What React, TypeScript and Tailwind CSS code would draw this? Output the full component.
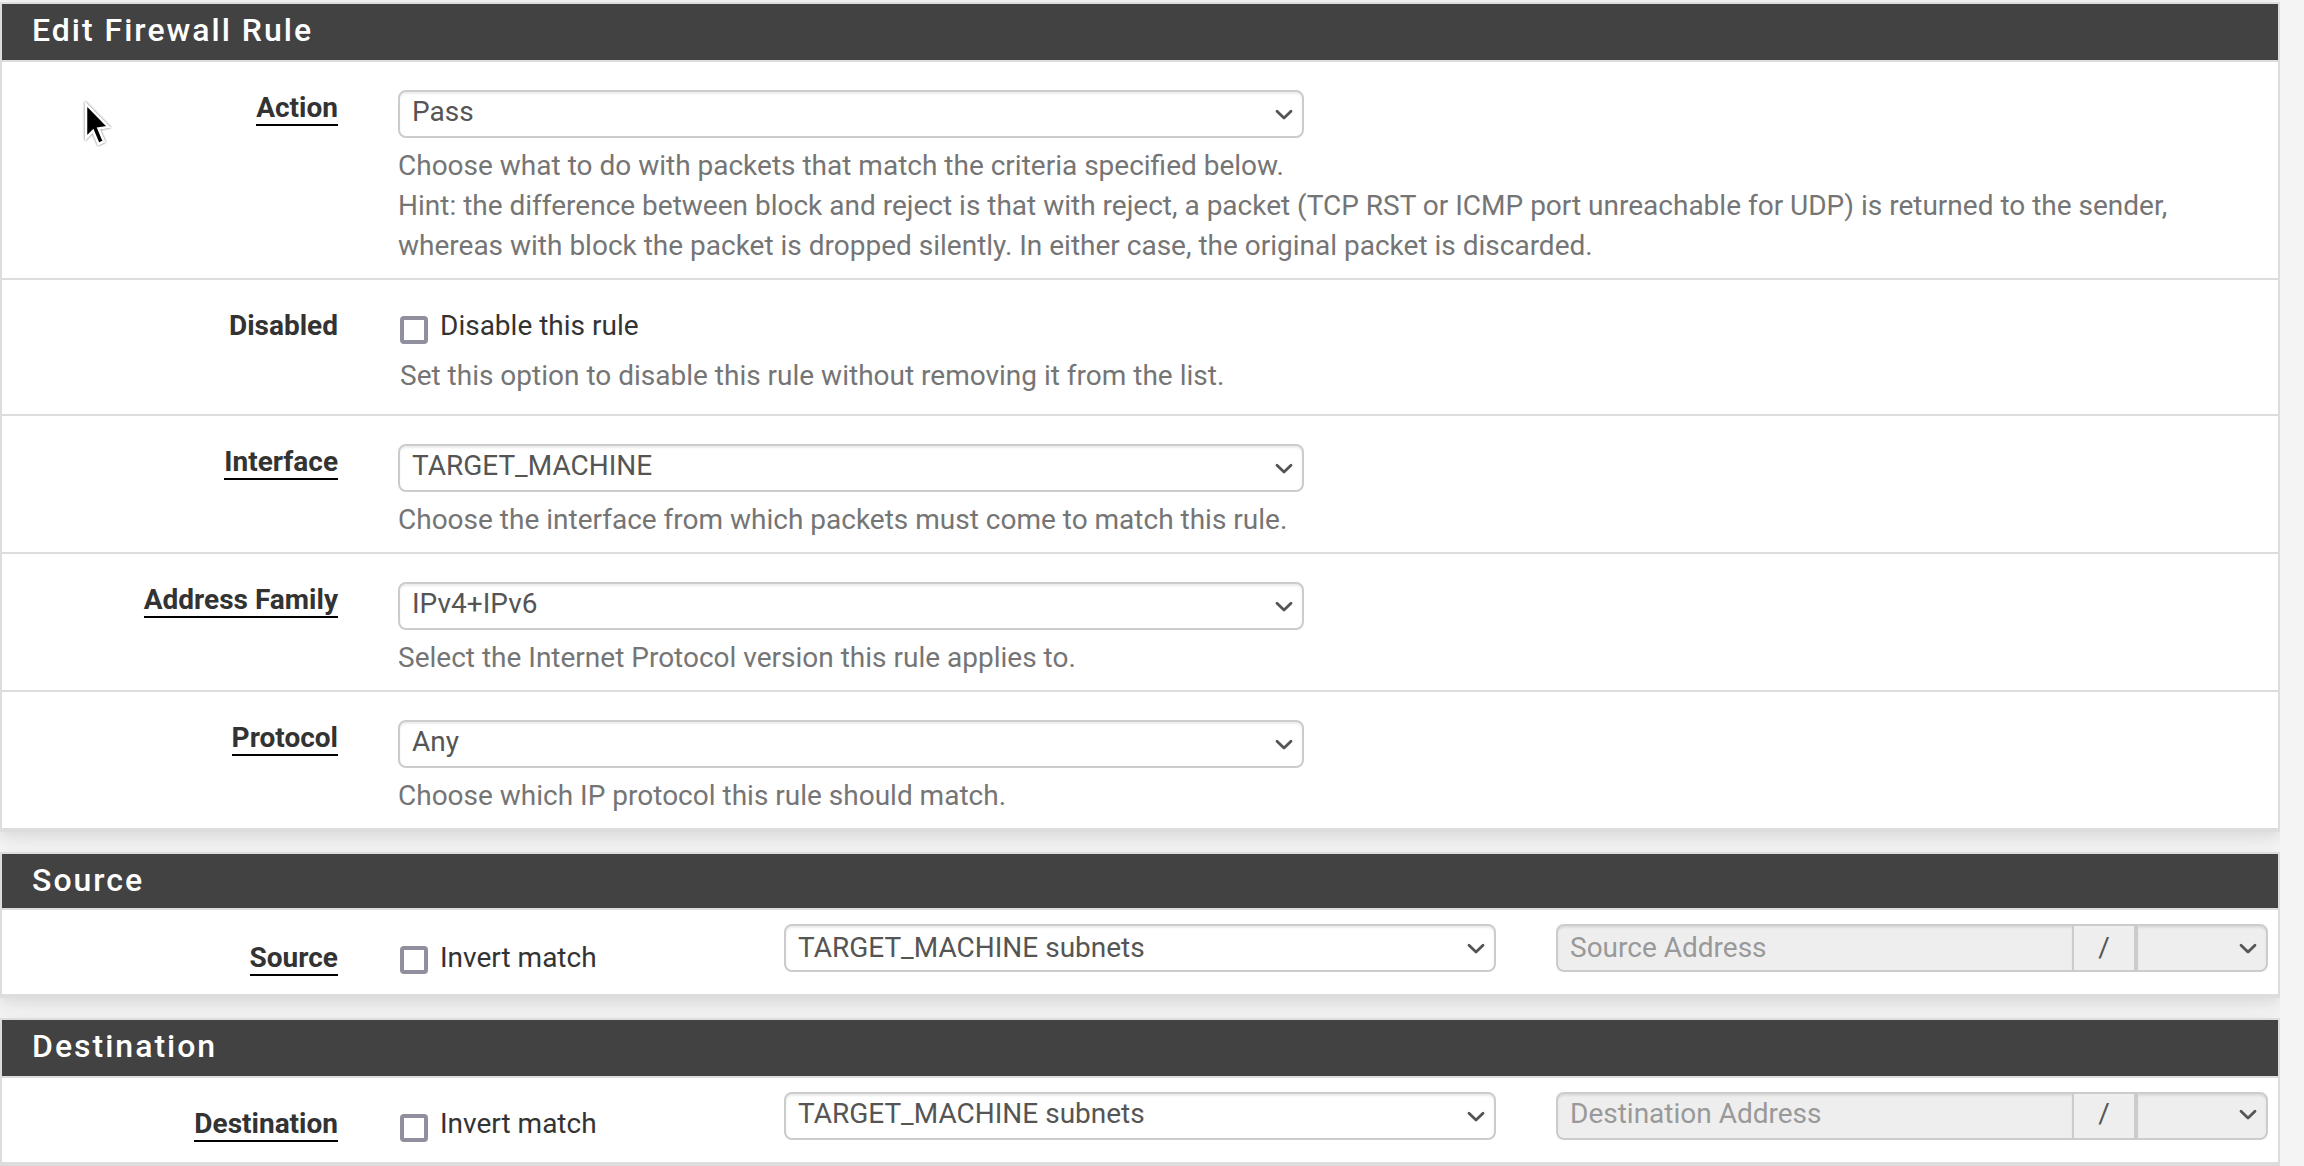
import React from "react";

function Chevron({ className = "mt-[2px]" }: { className?: string }) {
  return (
    <svg width="18" height="12" viewBox="0 0 18 12" className={`shrink-0 ${className}`} fill="none">
      <path d="M2 2.2 L9 9 L16 2.2" stroke="#555" strokeWidth="2.8" strokeLinecap="round" strokeLinejoin="round" />
    </svg>
  );
}

function Select({ value, className, textClass = "-mt-[4px]" }: { value: string; className: string; textClass?: string }) {
  return (
    <div
      className={`flex h-12 items-center justify-between rounded-lg border-2 border-[#ccc] bg-white pl-3 pr-[9px] text-[#555] shadow-[inset_0_2px_2px_rgba(0,0,0,0.075)] ${className}`}
    >
      <span className={textClass}>{value}</span>
      <Chevron />
    </div>
  );
}

function Checkbox({ label, className = "", boxClass }: { label: string; className?: string; boxClass: string }) {
  return (
    <div className={`flex items-start ${className}`}>
      <span className={`size-7 shrink-0 rounded-[4px] border-4 border-[#8f8f9d] bg-white ${boxClass}`} />
      <span className="ml-3 whitespace-nowrap leading-10">{label}</span>
    </div>
  );
}

function Label({ text, plain = false, className }: { text: string; plain?: boolean; className: string }) {
  return (
    <div className={`flex w-[336px] shrink-0 items-start justify-end font-bold ${className}`}>
      <span className={plain ? "leading-[36px]" : "h-9 border-b-2 border-black leading-[36px]"}>{text}</span>
    </div>
  );
}

function Panel({ title, headHeight, children }: { title: string; headHeight: string; children: React.ReactNode }) {
  return (
    <section className="border-2 border-[#ddd] bg-white shadow-[0_6px_12px_rgba(0,0,0,0.08),0_0_40px_rgba(0,0,0,0.03)]">
      <h2 className={`bg-[#424242] pl-[30px] pt-[7px] text-[32px] font-medium leading-[38px] tracking-[2px] text-white ${headHeight}`}>{title}</h2>
      {children}
    </section>
  );
}

const rowBase = "flex items-start border-t-2 border-[#ddd]";

function SelectRow({ label, value, help, height }: { label: string; value: string; help: React.ReactNode; height: string }) {
  return (
    <div className={`${rowBase} ${height}`}>
      <Label text={label} className="mt-[28px]" />
      <div className="ml-[60px] mt-[28px]">
        <Select value={value} className="w-[906px]" />
        <p className="mt-2 leading-10 text-[#757575]">{help}</p>
      </div>
    </div>
  );
}

interface AddressRowProps {
  label: string;
  placeholder: string;
  labelClass: string;
  checkClass: string;
  boxClass: string;
  textClass: string;
  chevronClass: string;
}

function AddressRow({ label, placeholder, labelClass, checkClass, boxClass, textClass, chevronClass }: AddressRowProps) {
  return (
    <div className={`${rowBase} h-[88px] border-b-2`}>
      <Label text={label} className={labelClass} />
      <Checkbox label="Invert match" className={`ml-[62px] w-[384px] ${checkClass}`} boxClass={boxClass} />
      <Select value="TARGET_MACHINE subnets" className="mt-[14px] w-[712px]" textClass={textClass} />
      <div className="ml-[60px] mt-[14px] flex h-12 w-[712px] text-[#555]">
        <div className="flex w-[516px] items-center rounded-l-lg border-2 border-r-0 border-[#ccc] bg-[#eee] pl-3 text-[#999] shadow-[inset_0_2px_2px_rgba(0,0,0,0.075)]">
          <span className={textClass}>{placeholder}</span>
        </div>
        <div className="flex w-[62px] items-center justify-center border-2 border-r-0 border-[#ccc] bg-[#eee]">
          <span className={textClass}>/</span>
        </div>
        <div className="flex flex-1 items-center justify-end rounded-r-lg border-2 border-l-4 border-[#ccc] bg-[#eee] pr-[9px] shadow-[inset_0_2px_2px_rgba(0,0,0,0.075)]">
          <Chevron className={chevronClass} />
        </div>
      </div>
    </div>
  );
}

function Pointer() {
  return (
    <svg
      width="30"
      height="48"
      viewBox="0 0 30 48"
      className="absolute left-[83px] top-[100px] drop-shadow-[0_0_1px_rgba(0,0,0,0.6)]"
    >
      <path d="M3 4 L3 38 L10 31 L15.5 44 L21 41.5 L15.5 28.5 L25.5 27 Z" fill="#000" stroke="#fff" strokeWidth="2.5" />
    </svg>
  );
}

export default function App() {
  return (
    <div className="relative h-[1166px] w-[2304px] overflow-hidden bg-[#f4f4f4] font-['Roboto',sans-serif] text-[28px] leading-10 text-[#333]">
      <main className="flex h-[1166px] w-[2280px] flex-col gap-5 overflow-hidden pt-[2px]">
        <Panel title="Edit Firewall Rule" headHeight="h-[56px]">
          <SelectRow
            label="Action"
            value="Pass"
            height="h-[218px]"
            help={
              <>
                Choose what to do with packets that match the criteria specified below.
                <br />
                Hint: the difference between block and reject is that with reject, a packet (TCP RST or ICMP port unreachable for UDP) is returned to the sender,
                <br />
                whereas with block the packet is dropped silently. In either case, the original packet is discarded.
              </>
            }
          />
          <div className={`${rowBase} h-[136px]`}>
            <Label text="Disabled" plain className="mt-[28px]" />
            <div className="ml-[62px] mt-[26px]">
              <Checkbox label="Disable this rule" boxClass="mt-[10px]" />
              <p className="mt-[10px] leading-10 text-[#757575]">Set this option to disable this rule without removing it from the list.</p>
            </div>
          </div>
          <SelectRow label="Interface" value="TARGET_MACHINE" height="h-[138px]" help="Choose the interface from which packets must come to match this rule." />
          <SelectRow label="Address Family" value="IPv4+IPv6" height="h-[138px]" help="Select the Internet Protocol version this rule applies to." />
          <div className="border-b-2 border-[#ddd]">
            <SelectRow label="Protocol" value="Any" height="h-[138px]" help="Choose which IP protocol this rule should match." />
          </div>
        </Panel>
        <Panel title="Source" headHeight="h-[54px]">
          <AddressRow
            label="Source"
            placeholder="Source Address"
            labelClass="mt-[30px]"
            checkClass="mt-[28px]"
            boxClass="mt-[8px]"
            textClass="mt-0"
            chevronClass="mt-[2px]"
          />
        </Panel>
        <Panel title="Destination" headHeight="h-[56px]">
          <AddressRow
            label="Destination"
            placeholder="Destination Address"
            labelClass="mt-[28px]"
            checkClass="mt-[26px]"
            boxClass="mt-[10px]"
            textClass="-mt-[4px]"
            chevronClass="-mt-[2px]"
          />
        </Panel>
      </main>
      <Pointer />
    </div>
  );
}
